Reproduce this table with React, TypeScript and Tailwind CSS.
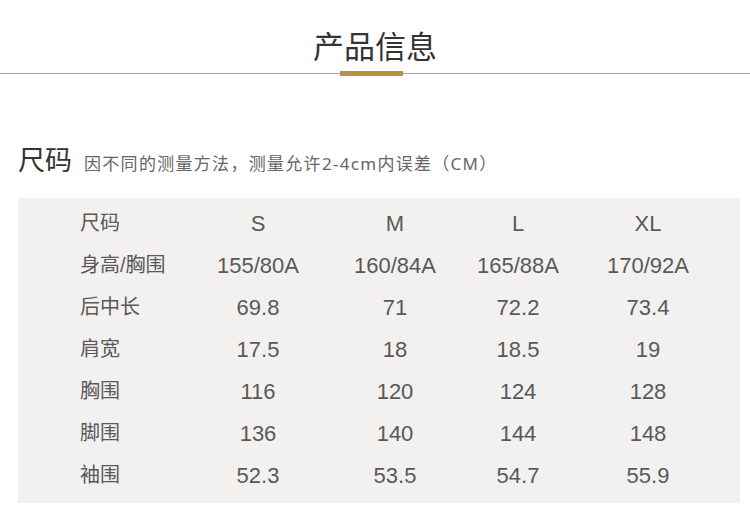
const FONT = { fontFamily: '"Liberation Sans", "Noto Sans CJK SC", sans-serif' }
const NOTE_FONT = { fontFamily: '"Noto Sans", "Noto Sans CJK SC", sans-serif' }

const HEAD = ['尺码', 'S', 'M', 'L', 'XL']

const ROWS: string[][] = [
  ['身高/胸围', '155/80A', '160/84A', '165/88A', '170/92A'],
  ['后中长', '69.8', '71', '72.2', '73.4'],
  ['肩宽', '17.5', '18', '18.5', '19'],
  ['胸围', '116', '120', '124', '128'],
  ['脚围', '136', '140', '144', '148'],
  ['袖围', '52.3', '53.5', '54.7', '55.9'],
]

const SizeRow = ({ cells }: { cells: string[] }) => (
  <div className="grid grid-cols-[116px_124px_150px_96px_164px] h-[42px] items-center text-[20px] text-[#595959]">
    {cells.map((c, i) => (
      <div key={i} className={i === 0 ? 'text-left' : 'text-center text-[22px]'}>
        {c}
      </div>
    ))}
  </div>
)

export default function App() {
  return (
    <div className="w-[750px] h-[520px] bg-white overflow-hidden" style={FONT}>
      {/* 标题 */}
      <div className="pt-[32px] text-center text-[31px] leading-[31px] text-[#333]">产品信息</div>
      <div className="relative mt-[10px] h-px bg-[#a6a6a6]">
        <div className="absolute left-[340px] -top-[2px] w-[63px] h-[5px] bg-[#b3953f]" />
      </div>

      {/* 尺码 */}
      <div className="mt-[72px] h-[30px] pl-[18px] flex items-baseline">
        <span className="text-[27px] leading-[30px] text-[#333]">尺码</span>
        <span className="ml-[12px] text-[17px] leading-[30px] tracking-[1.3px] text-[#666]" style={NOTE_FONT}>
          因不同的测量方法，测量允许2-4cm内误差（CM）
        </span>
      </div>

      <div className="mt-[22px] ml-[18px] w-[722px] bg-[#f3f0f0] pt-[4px] pb-[7px] pl-[62px]">
        <SizeRow cells={HEAD} />
        {ROWS.map((r, i) => (
          <SizeRow key={i} cells={r} />
        ))}
      </div>
    </div>
  )
}
